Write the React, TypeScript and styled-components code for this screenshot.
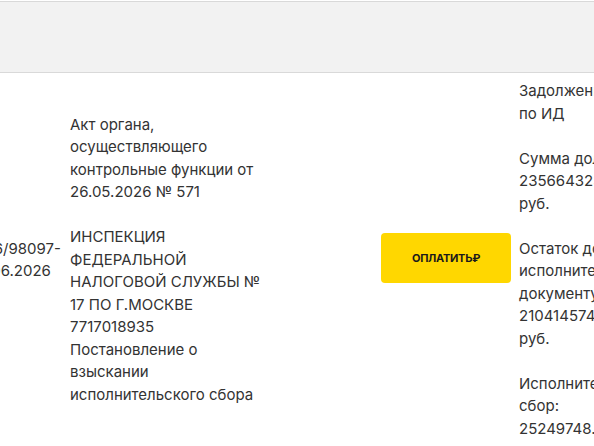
import styled, { createGlobalStyle } from 'styled-components';

const GlobalStyle = createGlobalStyle`
  html, body {
    margin: 0;
    padding: 0;
    background: #fff;
    overflow: hidden;
  }
  body {
    font-family: Inter, "Noto Sans", "Liberation Sans", sans-serif;
    color: #333;
  }
`;

const Page = styled.div`
  width: 594px;
  height: 446px;
  overflow: hidden;
`;

const TableHead = styled.div`
  margin-top: 1px;
  height: 70px;
  background: #f2f2f2;
  border-top: 1px solid #d9d9d9;
  border-bottom: 1px solid #d9d9d9;
`;

const Scroller = styled.div`
  overflow: hidden;
`;

const Row = styled.div`
  display: grid;
  grid-template-columns: 140px 192px 241px 130px;
  column-gap: 8px;
  align-items: center;
  margin-left: -78px;
  padding: 7px 0 8px;
  font-size: 15px;
  line-height: 22.5px;
`;

const Cell = styled.div<{ $end?: boolean }>`
  display: flex;
  flex-direction: column;
  gap: 22.5px;
  justify-self: ${(p) => (p.$end ? 'end' : 'stretch')};
`;

const Para = styled.div``;

const PayBtn = styled.button`
  width: 130px;
  height: 50px;
  margin-top: -4px;
  border: none;
  border-radius: 4px;
  background: #ffd700;
  color: #1a1a1a;
  font-family: Inter, "Noto Sans", sans-serif;
  font-size: 11px;
  font-weight: 700;
  letter-spacing: -0.3px;
  cursor: pointer;
`;

export default function App() {
  const details = [
    'Задолженность по ИД',
    'Сумма долга: 235664323.45 руб.',
    'Остаток долга по исполнительному документу: 210414574.87 руб.',
    'Исполнительский сбор: 25249748.58',
  ];

  return (
    <Page>
      <GlobalStyle />
      <TableHead />
      <Scroller>
        <Row>
          <Cell>
            <Para>2411573/26/98097-ИП от 08.06.2026</Para>
          </Cell>
          <Cell>
            <Para>Акт органа, осуществляющего контрольные функции от 26.05.2026 № 571</Para>
            <Para>
              ИНСПЕКЦИЯ ФЕДЕРАЛЬНОЙ НАЛОГОВОЙ СЛУЖБЫ № 17 ПО Г.МОСКВЕ
              <br />
              7717018935
              <br />
              Постановление о взыскании исполнительского сбора
            </Para>
          </Cell>
          <Cell $end>
            <PayBtn>ОПЛАТИТЬ₽</PayBtn>
          </Cell>
          <Cell>
            {details.map((d) => (
              <Para key={d}>{d}</Para>
            ))}
          </Cell>
        </Row>
      </Scroller>
    </Page>
  );
}
